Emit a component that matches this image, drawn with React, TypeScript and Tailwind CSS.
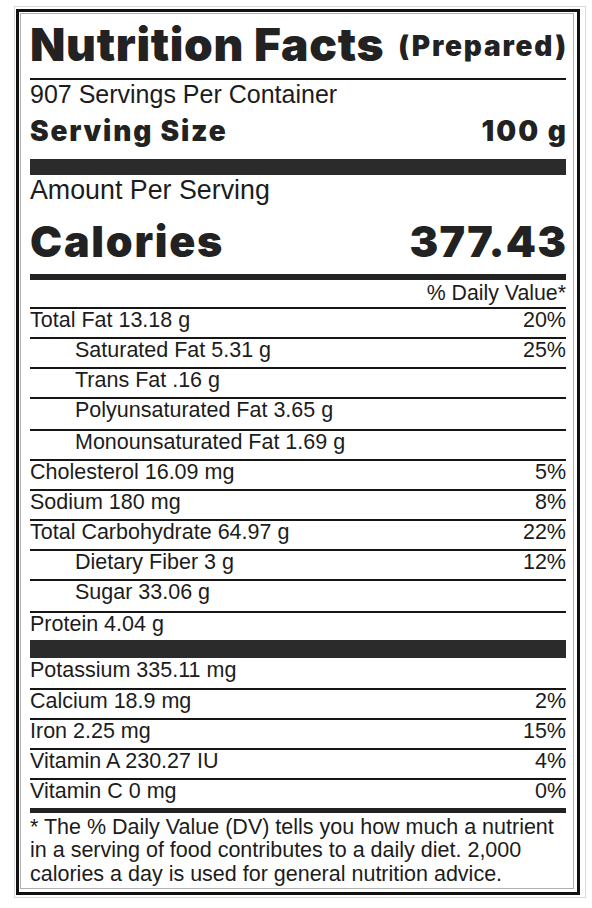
import React from "react";

type Row = {
  label: string;
  dv?: string;
  indent?: boolean;
  h?: string;
};

const fatRows: Row[] = [
  { label: "Total Fat 13.18 g", dv: "20%" },
  { label: "Saturated Fat 5.31 g", dv: "25%", indent: true },
  { label: "Trans Fat .16 g", indent: true },
  { label: "Polyunsaturated Fat 3.65 g", indent: true, h: "h-[32px]" },
  { label: "Monounsaturated Fat 1.69 g", indent: true },
  { label: "Cholesterol 16.09 mg", dv: "5%" },
  { label: "Sodium 180 mg", dv: "8%" },
  { label: "Total Carbohydrate 64.97 g", dv: "22%" },
  { label: "Dietary Fiber 3 g", dv: "12%", indent: true },
  { label: "Sugar 33.06 g", indent: true, h: "h-[32px]" },
  { label: "Protein 4.04 g", h: "h-[29px]" },
];

const minRows: Row[] = [
  { label: "Calcium 18.9 mg", dv: "2%" },
  { label: "Iron 2.25 mg", dv: "15%" },
  { label: "Vitamin A 230.27 IU", dv: "4%" },
  { label: "Vitamin C 0 mg", dv: "0%" },
];

function NRow({ row }: { row: Row }) {
  return (
    <div
      className={`flex justify-between border-t-2 border-[#161616] ${
        row.h ?? "h-[30px]"
      } leading-[23px]`}
    >
      <span className={row.indent ? "pl-[45px]" : ""}>{row.label}</span>
      {row.dv ? <span>{row.dv}</span> : null}
    </div>
  );
}

export default function App() {
  return (
    <div className="w-[592px] min-h-[908px] bg-white pl-[14px] pt-[6px] text-[#1c1c1c] font-['Liberation_Sans',Arial,sans-serif]">
      <div className="w-[572px] h-[892px] border border-[#d9d9d9] pl-[1px] pt-[2px] pr-[5px] pb-[2px]">
        <div className="h-full border-[3px] border-[#111] pl-[1px] pt-[1px] pr-[3px] pb-[3px]">
          <div className="h-full border border-[#b0b0b0] pl-[9px] pr-[7px] text-[21.5px]">
            {/* Title */}
            <div className="h-[64px] flex items-end justify-between pb-[11px] font-['Inter',sans-serif] font-black text-[#222]">
              <span className="text-[46px] leading-[46px] tracking-[0.7px]">Nutrition Facts</span>
              <span className="text-[28px] leading-[28px] mb-[7px] tracking-[1.8px] mr-[-1.8px]">(Prepared)</span>
            </div>
            <div className="h-[2px] bg-[#161616]" />
            <div className="h-[28px] text-[25px] leading-[28px]">907 Servings Per Container</div>
            <div className="h-[51px] pt-[6px] flex justify-between font-['Inter',sans-serif] font-black text-[28px] leading-[34px] text-[#222]">
              <span className="tracking-[1.8px]">Serving Size</span>
              <span className="tracking-[2.1px] mr-[-2.1px]">100 g</span>
            </div>
            <div className="h-[16px] bg-[#2b2b2b]" />
            <div className="h-[30px] text-[26.8px] leading-[30px]">Amount Per Serving</div>
            <div className="h-[69px] pt-[13px] flex justify-between font-['Inter',sans-serif] font-black text-[43px] leading-[46px] text-[#222]">
              <span className="tracking-[1.75px]">Calories</span>
              <span className="tracking-[1.2px] mr-[-1.2px]">377.43</span>
            </div>
            <div className="h-[6px] bg-[#222]" />
            <div className="h-[27px] text-right text-[21.3px] leading-[27px]">% Daily Value*</div>
            {fatRows.map((r) => (
              <NRow key={r.label} row={r} />
            ))}
            <div className="h-[18px] bg-[#2b2b2b]" />
            <div className="h-[30px] pt-[1px] leading-[23px]">Potassium 335.11 mg</div>
            {minRows.map((r) => (
              <NRow key={r.label} row={r} />
            ))}
            <div className="h-[5px] bg-[#222]" />
            <p className="pt-[2.5px] leading-[23.5px]">
              * The % Daily Value (DV) tells you how much a nutrient
              <br />
              in a serving of food contributes to a daily diet. 2,000
              <br />
              calories a day is used for general nutrition advice.
            </p>
          </div>
        </div>
      </div>
    </div>
  );
}
